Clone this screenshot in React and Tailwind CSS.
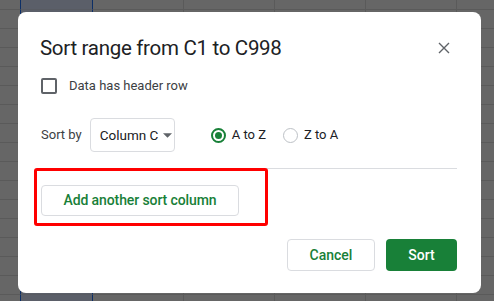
import React from "react";

const cols = [21, 72, 91, 91, 91, 91, 91];
const rows = 17;

function Grid() {
  const cells = [];
  for (let r = 0; r < rows; r++) {
    for (let c = 0; c < cols.length; c++) {
      const sel = c === 1;
      cells.push(
        <div
          key={r + "-" + c}
          className={
            sel
              ? "bg-[#5b5f69] border-r border-r-[#0d2f66] border-b border-b-[#585b62]"
              : c === 0
              ? "border-r border-r-[#0d2f66] border-b border-b-[#5a5a5a]"
              : "border-r border-r-[#5a5a5a] border-b border-b-[#5a5a5a]"
          }
        />
      );
    }
  }
  return (
    <div className="grid grid-cols-[21px_72px_91px_91px_91px_91px_91px] grid-rows-[10px_repeat(16,19px)] w-[548px]">
      {cells}
    </div>
  );
}

export default function App() {
  return (
    <div className="relative w-[494px] h-[301px] overflow-hidden bg-[#666666] font-['Roboto',sans-serif]">
      <Grid />
      <div className="absolute left-[18px] top-[12px] w-[463px] h-[281px] bg-white rounded-[8px] pl-[22px] pr-[24px] pt-[22px] flex flex-col">
        <div className="flex items-start justify-between">
          <h1 className="text-[20.5px] leading-[28px] text-[#202124] font-['Roboto',sans-serif] tracking-[-0.3px] whitespace-nowrap">
            Sort range from C1 to C998
          </h1>
          <svg width="12" height="12" viewBox="0 0 12 12" className="mt-[8px] mr-[7px]">
            <path d="M1 1L11 11M11 1L1 11" stroke="#5f6368" strokeWidth="1.4" />
          </svg>
        </div>
        <label className="flex items-center mt-[14px] ml-[1px] h-[20px]">
          <span className="w-[16px] h-[16px] border-2 border-[#5f6368] rounded-[2px]" />
          <span className="ml-[12px] text-[13px] text-[#3c4043]">Data has header row</span>
        </label>
        <div className="flex items-center mt-[22px] ml-[1px]">
          <span className="text-[13px] text-[#3c4043]">Sort by</span>
          <div className="ml-[8px] w-[85px] h-[34px] border border-[#dadce0] rounded-[4px] flex items-center pl-[9px]">
            <span className="text-[13.5px] text-[#202124] whitespace-nowrap">Column C</span>
            <svg width="9" height="5" viewBox="0 0 10 5" className="ml-[5px]">
              <path d="M0 0L5 5L10 0Z" fill="#5f6368" />
            </svg>
          </div>
          <div className="ml-[36px] flex items-center">
            <span className="w-[15px] h-[15px] rounded-full border-2 border-[#188038] flex items-center justify-center">
              <span className="w-[7px] h-[7px] rounded-full bg-[#188038]" />
            </span>
            <span className="ml-[6px] text-[13px] text-[#202124] whitespace-nowrap">A to Z</span>
          </div>
          <div className="ml-[17px] flex items-center">
            <span className="w-[15px] h-[15px] rounded-full border border-[#bdc1c6]" />
            <span className="ml-[6px] text-[13px] text-[#202124] whitespace-nowrap">Z to A</span>
          </div>
        </div>
        <div className="relative mt-[16px] h-[58px]">
          <div className="h-px bg-[#dadce0] ml-[18px]" />
          <div className="absolute left-[-6px] top-0 w-[234px] h-[58px] border-[3px] border-[#ff0000] rounded-[3px]" />
          <button className="absolute left-[1px] top-[17px] w-[198px] h-[31px] border border-[#dadce0] rounded-[4px] text-[14px] tracking-[-0.1px] font-medium text-[#188038] bg-white whitespace-nowrap">
            Add another sort column
          </button>
        </div>
        <div className="flex justify-end mt-[13px] gap-[11px] pr-0">
          <button className="w-[88px] h-[32px] border border-[#dadce0] rounded-[4px] text-[14px] font-medium text-[#188038] bg-white">
            Cancel
          </button>
          <button className="w-[71px] h-[32px] rounded-[4px] text-[14px] font-medium text-white bg-[#188038]">
            Sort
          </button>
        </div>
      </div>
    </div>
  );
}
